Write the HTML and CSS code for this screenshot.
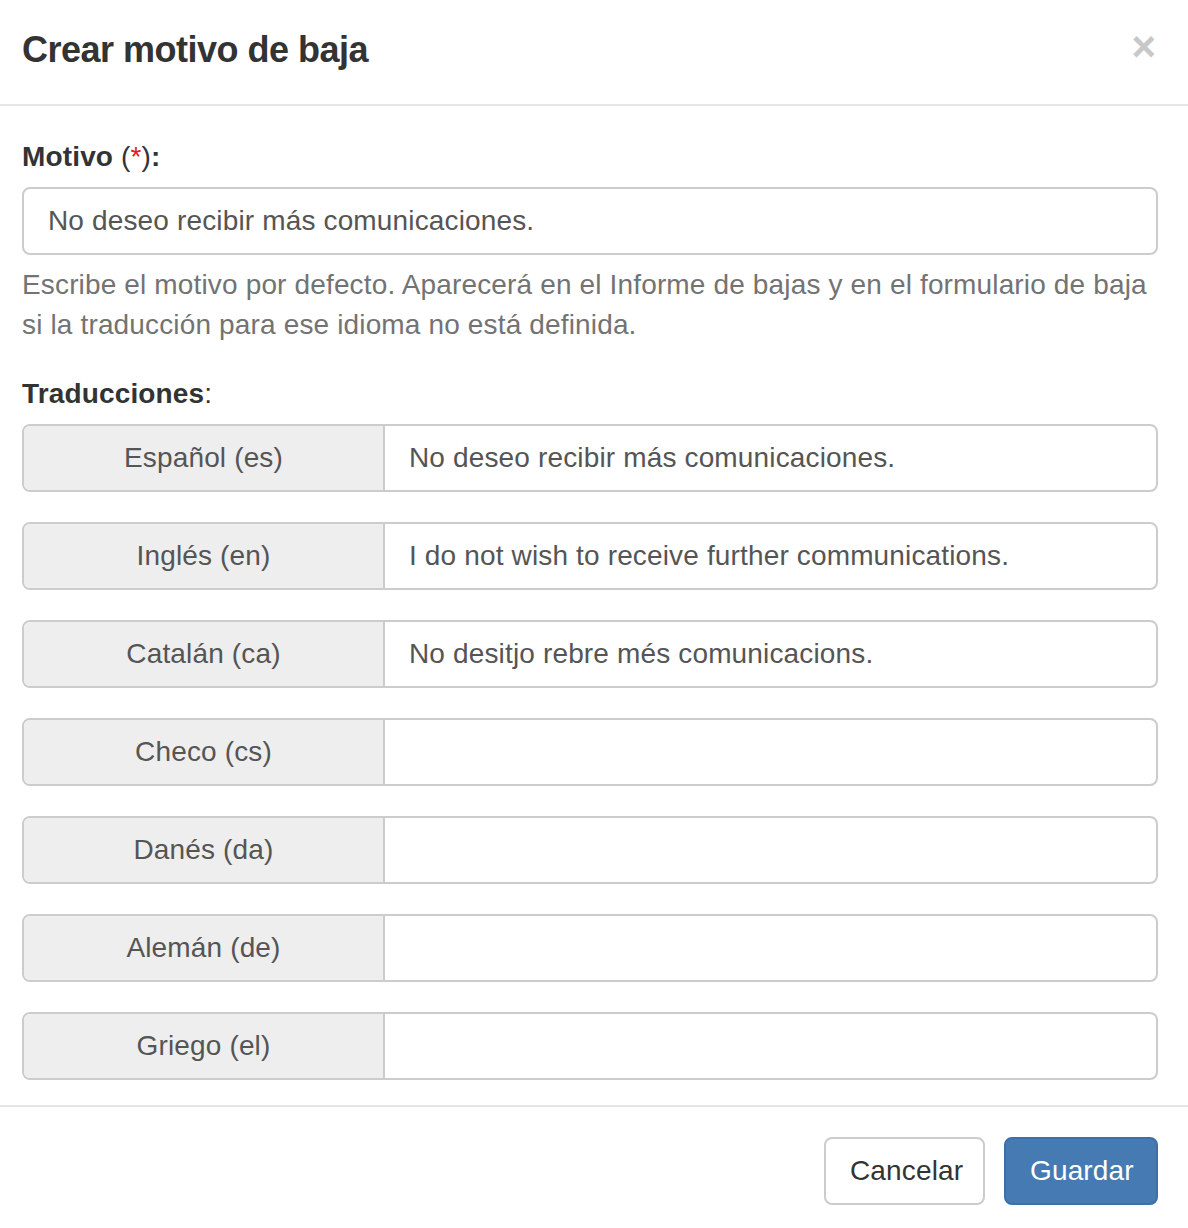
FILE: index.html
```html
<!DOCTYPE html>
<html lang="es">
<head>
<meta charset="utf-8">
<title>Crear motivo de baja</title>
<link rel="stylesheet" href="styles.css">
</head>
<body>
<div class="modal">
  <div class="modal-header">
    <button class="close" type="button" aria-label="Cerrar">×</button>
    <h4 class="modal-title">Crear motivo de baja</h4>
  </div>
  <div class="modal-body">
    <div class="form-group">
      <label class="label">Motivo <span class="req-wrap">(<span class="req">*</span>)</span>:</label>
      <div class="form-control">No deseo recibir más comunicaciones.</div>
      <p class="help">Escribe el motivo por defecto. Aparecerá en el Informe de bajas y en el formulario de baja si la traducción para ese idioma no está definida.</p>
    </div>
    <label class="label">Traducciones<span class="normal">:</span></label>
    <div class="groups">
      <div class="input-group"><span class="addon">Español (es)</span><span class="field">No deseo recibir más comunicaciones.</span></div>
      <div class="input-group"><span class="addon">Inglés (en)</span><span class="field">I do not wish to receive further communications.</span></div>
      <div class="input-group"><span class="addon">Catalán (ca)</span><span class="field">No desitjo rebre més comunicacions.</span></div>
      <div class="input-group"><span class="addon">Checo (cs)</span><span class="field"></span></div>
      <div class="input-group"><span class="addon">Danés (da)</span><span class="field"></span></div>
      <div class="input-group"><span class="addon">Alemán (de)</span><span class="field"></span></div>
      <div class="input-group"><span class="addon">Griego (el)</span><span class="field"></span></div>
    </div>
  </div>
  <div class="modal-footer">
    <button class="btn btn-default" type="button">Cancelar</button>
    <button class="btn btn-primary" type="button">Guardar</button>
  </div>
</div>
</body>
</html>
```

FILE: styles.css
```css
* { box-sizing: border-box; }
html, body { margin: 0; padding: 0; background: #fff; }
body {
  font-family: "Liberation Sans", Arial, sans-serif;
  font-size: 28px;
  line-height: 40px;
  letter-spacing: 0.15px;
  color: #333;
  width: 1188px;
  overflow: hidden;
}
.modal { width: 1188px; }
.modal-header {
  padding: 24px 32px 29px 22px;
  border-bottom: 2px solid #e5e5e5;
  height: 106px;
}
.modal-title {
  margin: 0;
  font-size: 36px;
  line-height: 51px;
  font-weight: bold;
  letter-spacing: -0.5px;
  color: #333;
}
.close {
  float: right;
  margin-top: -3px;
  padding: 0;
  border: 0;
  background: transparent;
  font-family: "Liberation Sans", Arial, sans-serif;
  font-size: 42px;
  font-weight: bold;
  line-height: 51px;
  color: #c8c8c8;
}
.modal-body {
  padding: 31px 30px 25px 22px;
}
.label {
  display: block;
  font-weight: bold;
  margin-bottom: 10px;
}
.req-wrap, .normal { font-weight: normal; }
.req { color: #e02020; }
.form-control {
  height: 68px;
  border: 2px solid #ccc;
  border-radius: 8px;
  padding: 12px 24px;
  color: #555;
  line-height: 40px;
}
.help {
  margin: 10px 0 29px;
  color: #737373;
}
.groups {
  display: flex;
  flex-direction: column;
  gap: 30px;
  margin-top: 1px;
}
.input-group {
  display: flex;
  height: 68px;
  border: 2px solid #ccc;
  border-radius: 8px;
  overflow: hidden;
}
.addon {
  flex: 0 0 361px;
  background: #eee;
  border-right: 2px solid #ccc;
  color: #555;
  text-align: center;
  line-height: 64px;
}
.field {
  flex: 1;
  padding: 0 24px;
  color: #555;
  line-height: 64px;
  white-space: nowrap;
}
.modal-footer {
  border-top: 2px solid #e5e5e5;
  padding: 30px 30px 30px 22px;
  display: flex;
  justify-content: flex-end;
  gap: 19px;
}
.btn {
  font-family: "Liberation Sans", Arial, sans-serif;
  font-size: 28px;
  line-height: 40px;
  letter-spacing: 0.15px;
  padding: 12px 24px;
  border-radius: 8px;
  border: 2px solid #ccc;
  height: 68px;
}
.btn-default { background: #fff; color: #333; width: 161px; }
.btn-primary { background: #467ab3; border-color: #3e6fa6; color: #fff; width: 154px; }
```
